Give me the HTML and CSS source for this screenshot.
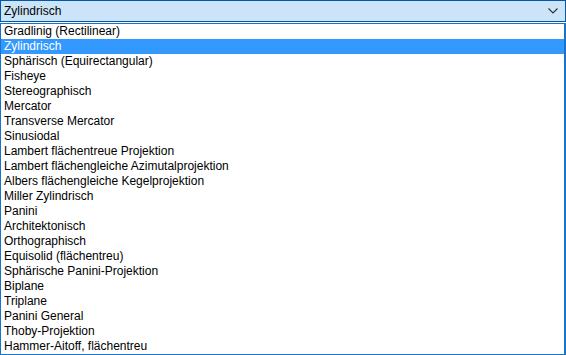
FILE: index.html
```html
<!DOCTYPE html>
<html>
<head>
    <title>Projektion</title>
    <link rel="stylesheet" href="styles.css">
</head>
<body>
    <div class="combo">
        <span class="combo-value">Zylindrisch</span>
        <svg class="chevron" width="10" height="6" viewBox="0 0 10 6">
            <path d="M0.5 0.5 L5 5 L9.5 0.5" fill="none" stroke="#333" stroke-width="1.2"/>
        </svg>
    </div>
    <ul class="dropdown">
        <li>Gradlinig (Rectilinear)</li>
        <li class="selected">Zylindrisch</li>
        <li>Sphärisch (Equirectangular)</li>
        <li>Fisheye</li>
        <li>Stereographisch</li>
        <li>Mercator</li>
        <li>Transverse Mercator</li>
        <li>Sinusiodal</li>
        <li>Lambert flächentreue Projektion</li>
        <li>Lambert flächengleiche Azimutalprojektion</li>
        <li>Albers flächengleiche Kegelprojektion</li>
        <li>Miller Zylindrisch</li>
        <li>Panini</li>
        <li>Architektonisch</li>
        <li>Orthographisch</li>
        <li>Equisolid (flächentreu)</li>
        <li>Sphärische Panini-Projektion</li>
        <li>Biplane</li>
        <li>Triplane</li>
        <li>Panini General</li>
        <li>Thoby-Projektion</li>
        <li>Hammer-Aitoff, flächentreu</li>
    </ul>
</body>
</html>
```
FILE: styles.css
```css
/* Windows style combobox with open list */

body {
    margin: 0;
    padding: 0;
    background-color: #fff;
    font-family: "Liberation Sans", Arial, sans-serif;
    font-size: 12px;
    color: #000;
}

.combo {
    display: flex;
    align-items: center;
    justify-content: space-between;
    height: 20px;
    padding: 0 7px 0 3px;
    background-color: #cce4f7;
    border: 1px solid #0556a6;
}

.chevron {
    display: block;
}

.dropdown {
    list-style: none;
    margin: 1px 0 0 0;
    padding: 0;
    background-color: #fff;
    border: 1px solid #1874c9;
    border-right-width: 2px;
    border-bottom-width: 2px;
}

.dropdown li {
    height: 15px;
    line-height: 15px;
    padding-left: 3px;
    white-space: nowrap;
}

.dropdown li.selected {
    background-color: #3399ff;
    color: #fff;
}
```
